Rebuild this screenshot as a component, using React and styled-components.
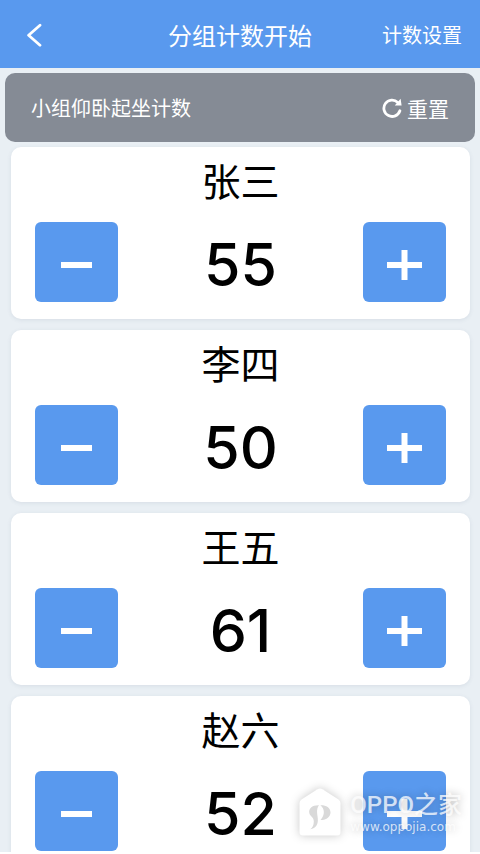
import React, { useState } from "react";
import styled, { createGlobalStyle } from "styled-components";

const GlobalStyle = createGlobalStyle`
  * {
    box-sizing: border-box;
  }
  body {
    margin: 0;
    background: #fff;
    font-family: "Noto Sans CJK SC", sans-serif;
  }
  button {
    border: none;
    padding: 0;
    background: none;
    color: inherit;
    font-family: inherit;
    cursor: pointer;
  }
`;

const Page = styled.div`
  position: relative;
  display: flex;
  flex-direction: column;
  height: 100vh;
  padding-bottom: 2px;
  overflow: hidden;
`;

const Header = styled.header`
  display: grid;
  grid-template-columns: 1fr auto 1fr;
  align-items: center;
  flex-shrink: 0;
  height: 68px;
  padding: 2px 18px 0;
  background: #5999ee;
  color: #fff;
`;

const BackButton = styled.button`
  justify-self: start;
  display: flex;
  padding: 0 8px;
`;

const Title = styled.h1`
  margin: 0;
  font-size: 24px;
  font-weight: 400;
  line-height: 32px;
`;

const SettingsButton = styled.button`
  justify-self: end;
  font-size: 20px;
  line-height: 32px;
`;

const Content = styled.main`
  display: flex;
  flex-direction: column;
  flex: 1;
  min-height: 0;
  padding-top: 5px;
  background: #e9eff4;
`;

const GroupBar = styled.section`
  display: flex;
  align-items: center;
  justify-content: space-between;
  flex-shrink: 0;
  height: 69px;
  margin: 0 5px;
  padding: 0 26px;
  border-radius: 10px;
  background: #858b95;
  color: #fff;
`;

const GroupName = styled.h2`
  margin: 0;
  font-size: 20px;
  font-weight: 400;
  line-height: 32px;
`;

const ResetButton = styled.button`
  display: flex;
  align-items: center;
  gap: 5px;
  font-size: 21px;
  line-height: 32px;
`;

const List = styled.ul`
  display: flex;
  flex-direction: column;
  gap: 11px;
  min-height: 0;
  margin: 0;
  padding: 5px 10px 0 11px;
  overflow-y: auto;
  scrollbar-width: none;
  list-style: none;
`;

const Card = styled.li`
  flex-shrink: 0;
  padding: 8px 24px 17px;
  border-radius: 10px;
  background: #fff;
  box-shadow: 0 1px 4px rgba(60, 80, 110, 0.1);
`;

const PersonName = styled.h3`
  margin: 0;
  font-size: 39px;
  font-weight: 400;
  line-height: 48px;
  text-align: center;
  color: #000;
`;

const CounterRow = styled.div`
  display: flex;
  align-items: center;
  justify-content: space-between;
  margin-top: 19px;
`;

const StepButton = styled.button`
  display: flex;
  align-items: center;
  justify-content: center;
  width: 83px;
  height: 80px;
  padding-top: 5px;
  border-radius: 6px;
  background: #5999ee;
`;

const Count = styled.output`
  padding-top: 6px;
  font-family: Inter, sans-serif;
  font-size: 59px;
  font-weight: 450;
  line-height: 72px;
  color: #000;
`;

const Watermark = styled.div`
  position: absolute;
  right: 18px;
  bottom: 16px;
  display: flex;
  align-items: center;
  gap: 9px;
  color: rgba(255, 255, 255, 0.75);
  pointer-events: none;
`;

const WatermarkText = styled.div`
  display: flex;
  flex-direction: column;
  text-shadow: 0 0 8px rgba(0, 0, 0, 0.28);
`;

const Brand = styled.span`
  font-family: Roboto, "Noto Sans CJK SC", sans-serif;
  font-size: 24px;
  font-weight: 500;
  line-height: 28px;
`;

const Site = styled.span`
  font-family: "DejaVu Sans", sans-serif;
  font-size: 12px;
  line-height: 16px;
`;

const Logo = styled.svg`
  margin-bottom: 2px;
  overflow: visible;
  filter: drop-shadow(0 0 5px rgba(0, 0, 0, 0.22));
`;

const BackIcon = () => (
  <svg width="16" height="24" viewBox="0 0 16 24" fill="none">
    <path
      d="M14 2.2 2.6 12.2 14 22.2"
      stroke="#fff"
      strokeWidth="2.8"
      strokeLinecap="round"
      strokeLinejoin="round"
    />
  </svg>
);

const ResetIcon = () => (
  <svg width="20" height="20" viewBox="0 0 20 20" fill="none">
    <path
      d="M15.8 4.4A8.2 8.2 0 1 0 17.9 12.8"
      stroke="#fff"
      strokeWidth="2.8"
      strokeLinecap="round"
    />
    <path d="M18.6 .8 19.6 7.4H12.8Z" fill="#fff" />
  </svg>
);

const MinusIcon = () => (
  <svg width="31" height="30" viewBox="0 0 31 30">
    <path d="M0 12h31v6H0z" fill="#fff" />
  </svg>
);

const PlusIcon = () => (
  <svg width="35" height="30" viewBox="0 0 35 30">
    <path d="M14.5 0h6v12H35v6H20.5v12h-6V18H0v-6h14.5z" fill="#fff" />
  </svg>
);

const HouseLogo = () => (
  <Logo width="42" height="48" viewBox="0 0 42 48">
    <path
      d="M18.5 1.2Q21-.4 23.5 1.2L39.5 11.5Q41.5 13 41.5 15V44Q41.5 47.5 38 47.5H4Q.5 47.5.5 44V15Q.5 13 2.5 11.500Z"
      fill="#fff"
    />
    <path
      d="M20 17.2C13 17 9.500 20.500 10.300 25C11 28.500 15 29 14.800 33.500C14.700 37.500 13.500 39.800 11.200 41.300C17 40.500 19.300 36.500 18.800 30.500C18.500 26 16.800 21.500 20 17.200Z"
      fill="#d9d9d9"
    />
    <path
      d="M21.400 17.200C25.800 20.500 26.200 27 21.500 32C28 32 31.600 28.500 31.500 24.200C31.300 19.500 27 17 21.400 17.200Z"
      fill="#d9d9d9"
    />
  </Logo>
);

const initialPeople = [
  { name: "张三", count: 55 },
  { name: "李四", count: 50 },
  { name: "王五", count: 61 },
  { name: "赵六", count: 52 }
];

const App = () => {
  const [people, setPeople] = useState(initialPeople);

  const step = (name, amount) =>
    setPeople(
      people.map(p =>
        p.name === name ? { ...p, count: Math.max(0, p.count + amount) } : p
      )
    );

  const reset = () => setPeople(people.map(p => ({ ...p, count: 0 })));

  return (
    <Page>
      <GlobalStyle />
      <Header>
        <BackButton type="button" aria-label="返回">
          <BackIcon />
        </BackButton>
        <Title>分组计数开始</Title>
        <SettingsButton type="button">计数设置</SettingsButton>
      </Header>
      <Content>
        <GroupBar>
          <GroupName>小组仰卧起坐计数</GroupName>
          <ResetButton type="button" onClick={reset}>
            <ResetIcon />
            重置
          </ResetButton>
        </GroupBar>
        <List>
          {people.map(({ name, count }) => (
            <Card key={name}>
              <PersonName>{name}</PersonName>
              <CounterRow>
                <StepButton
                  type="button"
                  aria-label={`${name} 减一`}
                  onClick={() => step(name, -1)}
                >
                  <MinusIcon />
                </StepButton>
                <Count>{count}</Count>
                <StepButton
                  type="button"
                  aria-label={`${name} 加一`}
                  onClick={() => step(name, 1)}
                >
                  <PlusIcon />
                </StepButton>
              </CounterRow>
            </Card>
          ))}
        </List>
      </Content>
      <Watermark>
        <HouseLogo />
        <WatermarkText>
          <Brand>OPPO之家</Brand>
          <Site>www.oppojia.com</Site>
        </WatermarkText>
      </Watermark>
    </Page>
  );
};

export default App;
